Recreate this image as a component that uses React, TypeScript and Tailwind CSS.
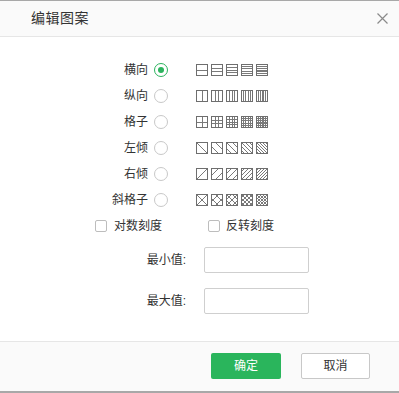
import React from 'react';

type Kind = 'h' | 'v' | 'grid' | 'left' | 'right' | 'cross';

const rows: { label: string; kind: Kind; checked?: boolean }[] = [
  { label: '横向', kind: 'h', checked: true },
  { label: '纵向', kind: 'v' },
  { label: '格子', kind: 'grid' },
  { label: '左倾', kind: 'left' },
  { label: '右倾', kind: 'right' },
  { label: '斜格子', kind: 'cross' },
];

function Pattern({ kind, level }: { kind: Kind; level: number }) {
  const s = 12;
  const straight = [1, 2, 3, 4, 5][level];
  const diag = [1, 2, 3, 5, 7][level];
  const segs: [number, number, number, number][] = [];

  const horiz = () => {
    for (let k = 1; k <= straight; k++) {
      const y = 0.5 + Math.round((k * 11) / (straight + 1));
      segs.push([0, y, s, y]);
    }
  };
  const vert = () => {
    for (let k = 1; k <= straight; k++) {
      const x = 0.5 + Math.round((k * 11) / (straight + 1));
      segs.push([x, 0, x, s]);
    }
  };
  const back = () => {
    for (let k = 1; k <= diag; k++) {
      const c = -s + (2 * s * k) / (diag + 1);
      const x1 = Math.max(0, c);
      const x2 = Math.min(s, s + c);
      segs.push([x1, x1 - c, x2, x2 - c]);
    }
  };
  const fwd = () => {
    for (let k = 1; k <= diag; k++) {
      const t = (2 * s * k) / (diag + 1);
      const x1 = Math.max(0, t - s);
      const x2 = Math.min(s, t);
      segs.push([x1, t - x1, x2, t - x2]);
    }
  };

  if (kind === 'h') horiz();
  if (kind === 'v') vert();
  if (kind === 'grid') {
    horiz();
    vert();
  }
  if (kind === 'left') back();
  if (kind === 'right') fwd();
  if (kind === 'cross') {
    back();
    fwd();
  }

  return (
    <svg width="12" height="12" viewBox="0 0 12 12" className="shrink-0">
      {segs.map(([x1, y1, x2, y2], i) => (
        <line key={i} x1={x1} y1={y1} x2={x2} y2={y2} stroke="#7a7a7a" strokeWidth="1" />
      ))}
      <rect x="0.5" y="0.5" width="11" height="11" fill="none" stroke="#6e6e6e" strokeWidth="1" />
    </svg>
  );
}

function Radio({ checked }: { checked?: boolean }) {
  return (
    <span
      className={
        checked
          ? 'w-[14px] h-[14px] rounded-full border border-[#2bb35d] flex items-center justify-center bg-white'
          : 'block w-[14px] h-[14px] rounded-full border border-[#c8c8c8] bg-white'
      }
    >
      {checked ? <span className="w-[6px] h-[6px] rounded-full bg-[#2bb35d]" /> : null}
    </span>
  );
}

export default function App() {
  return (
    <div className="w-[399px] h-[393px] flex flex-col bg-white border-t border-[#a8a8a8] font-['Liberation_Sans','Noto_Sans_CJK_SC',sans-serif] text-[#333]">
      <div className="h-[36px] flex items-center justify-between pl-[31px] pr-[11px] bg-[#fafafa] border-b border-[#e6e6e6] shrink-0">
        <span className="text-[14px] tracking-[0.5px] text-[#333]">编辑图案</span>
        <svg width="11" height="11" viewBox="0 0 11 11">
          <path d="M0.5 0.5 L10.5 10.5 M10.5 0.5 L0.5 10.5" stroke="#8a8a8a" strokeWidth="1.2" />
        </svg>
      </div>

      <div className="flex-1 pt-[20px]">
        {rows.map((r) => (
          <div key={r.kind} className="h-[26px] flex items-center">
            <span className="w-[148px] text-right text-[12px]">{r.label}</span>
            <span className="ml-[6px]">
              <Radio checked={r.checked} />
            </span>
            <div className="ml-[28px] flex gap-[3px]">
              {[0, 1, 2, 3, 4].map((lv) => (
                <Pattern key={lv} kind={r.kind} level={lv} />
              ))}
            </div>
          </div>
        ))}

        <div className="h-[26px] flex items-center pl-[95px] text-[12px]">
          <span className="w-[12px] h-[12px] border border-[#bdbdbd] rounded-[2px] bg-white" />
          <span className="ml-[7px] w-[94px]">对数刻度</span>
          <span className="w-[12px] h-[12px] border border-[#bdbdbd] rounded-[2px] bg-white" />
          <span className="ml-[6px]">反转刻度</span>
        </div>

        <div className="mt-[8px] flex items-center">
          <span className="w-[186px] text-right text-[12px]">最小值:</span>
          <div className="ml-[18px] w-[105px] h-[26px] border border-[#cfcfcf] rounded-[2px] bg-white" />
        </div>
        <div className="mt-[15px] flex items-center">
          <span className="w-[186px] text-right text-[12px]">最大值:</span>
          <div className="ml-[18px] w-[105px] h-[26px] border border-[#cfcfcf] rounded-[2px] bg-white" />
        </div>
      </div>

      <div className="h-[52px] shrink-0 flex items-center justify-end gap-[20px] pr-[29px] pb-[2px] bg-[#fafafa] border-t border-[#e6e6e6] border-b-2 border-b-[#a8a8a8]">
        <button className="w-[70px] h-[26px] rounded-[2px] bg-[#2ab55c] text-white text-[12px]">确定</button>
        <button className="w-[69px] h-[26px] rounded-[2px] bg-white border border-[#c8c8c8] text-[#333] text-[12px]">取消</button>
      </div>
    </div>
  );
}
